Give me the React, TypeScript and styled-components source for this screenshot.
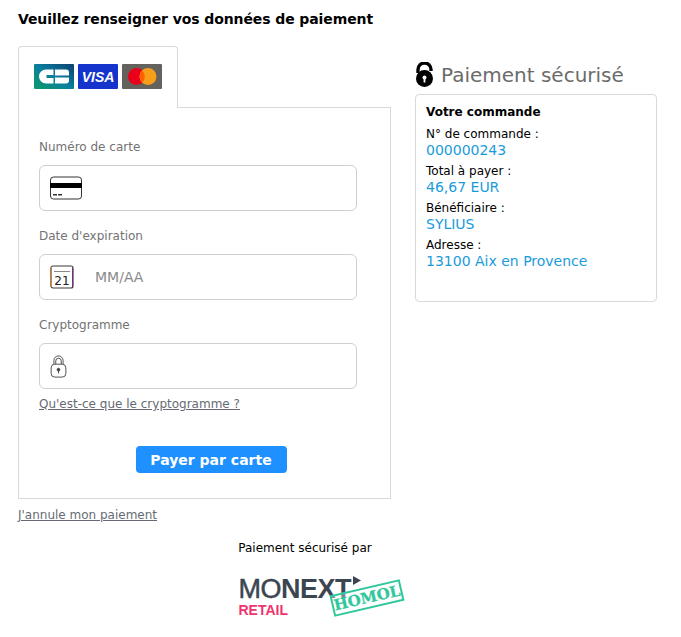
import React from 'react';
import styled, { createGlobalStyle } from 'styled-components';

const GlobalStyle = createGlobalStyle`
  html, body {
    margin: 0;
    padding: 0;
    background: #ffffff;
    font-family: "DejaVu Sans", Verdana, sans-serif;
  }
`;

const Page = styled.div`
  width: 681px;
  height: 637px;
  padding: 10px 24px 0 18px;
  box-sizing: border-box;
  overflow: hidden;
`;

const Title = styled.h1`
  margin: 0 0 18px;
  font-size: 14px;
  line-height: 18px;
  letter-spacing: -0.1px;
  font-weight: bold;
  color: #000;
`;

const Columns = styled.div`
  display: flex;
  align-items: flex-start;
  gap: 24px;
`;

const LeftColumn = styled.div`
  width: 373px;
  flex: none;
`;

const RightColumn = styled.div`
  width: 242px;
  flex: none;
  padding-top: 15px;
`;

const Tab = styled.div`
  width: 160px;
  height: 62px;
  box-sizing: border-box;
  border: 1px solid #d9d9d9;
  border-bottom: none;
  border-radius: 4px 4px 0 0;
  background: #fff;
  padding: 17px 0 0 15px;
  display: flex;
  gap: 4px;
  align-items: flex-start;
  position: relative;
  z-index: 1;
`;

const Brand = styled.div`
  width: 40px;
  height: 25px;
  border-radius: 1px;
  overflow: hidden;
  svg { display: block; }
`;

const Panel = styled.div`
  margin-top: -1px;
  height: 392px;
  box-sizing: border-box;
  border: 1px solid #d9d9d9;
  padding: 31px 33px 0 20px;
`;

const Field = styled.div`
  margin-bottom: 17px;
`;

const Label = styled.div`
  font-size: 12px;
  line-height: 16px;
  color: #737373;
  margin-bottom: 10px;
`;

const InputBox = styled.div`
  height: 46px;
  box-sizing: border-box;
  border: 1px solid #cfcfcf;
  border-radius: 6px;
  display: flex;
  align-items: center;
  padding-left: 10px;
`;

const Placeholder = styled.span`
  font-size: 14px;
  color: #8a8a8a;
  margin-left: 21px;
`;

const HelpLink = styled.a`
  display: block;
  margin-top: -10px;
  font-size: 12px;
  line-height: 16px;
  color: #666b73;
  text-decoration: underline;
`;

const PayRow = styled.div`
  display: flex;
  justify-content: center;
  margin-top: 34px;
  padding-left: 26px;
`;

const PayButton = styled.button`
  width: 151px;
  height: 27px;
  border: none;
  border-radius: 4px;
  background: #1e90ff;
  color: #fff;
  font-family: inherit;
  font-size: 14px;
  font-weight: bold;
  padding: 0;
`;

const CancelLink = styled.a`
  display: block;
  margin-top: 8px;
  font-size: 12px;
  line-height: 16px;
  color: #666b73;
  text-decoration: underline;
`;

const SecureHeader = styled.div`
  display: flex;
  align-items: center;
  gap: 7px;
  height: 28px;
  margin-bottom: 5px;
`;

const SecureTitle = styled.span`
  font-size: 20px;
  color: #6b6b6b;
`;

const OrderBox = styled.div`
  height: 208px;
  box-sizing: border-box;
  border: 1px solid #d9d9d9;
  border-radius: 4px;
  padding: 9px 10px;
`;

const OrderTitle = styled.div`
  font-size: 12px;
  line-height: 17px;
  font-weight: bold;
  color: #000;
  margin-bottom: 5px;
`;

const OrderLabel = styled.div`
  font-size: 12px;
  line-height: 16px;
  color: #000;
`;

const OrderValue = styled.div`
  font-size: 14px;
  line-height: 17px;
  color: #1a9bdc;
  margin-bottom: 4px;
`;

const Footer = styled.div`
  display: flex;
  flex-direction: column;
  align-items: center;
  width: 574px;
  margin-top: 17px;
`;

const FooterText = styled.div`
  font-size: 12px;
  line-height: 16px;
  color: #000;
  margin-bottom: 19px;
`;

const LogoWrap = styled.div`
  width: 166px;
  height: 46px;
  position: relative;
  margin-left: 33px;
`;

const MonextWord = styled.div`
  font-family: "Liberation Sans", Arial, sans-serif;
  font-size: 27px;
  line-height: 28px;
  letter-spacing: -0.5px;
  color: #3c4650;
`;

const MonextLight = styled.span`
  -webkit-text-stroke: 0.5px #3c4650;
`;

const MonextBold = styled.span`
  font-weight: bold;
`;

const Retail = styled.div`
  font-family: "Liberation Sans", Arial, sans-serif;
  font-size: 14px;
  line-height: 15px;
  font-weight: bold;
  color: #f0336f;
`;

const Arrow = styled.svg`
  position: absolute;
  left: 114px;
  top: 1px;
`;

const Stamp = styled.div`
  position: absolute;
  left: 92px;
  top: 12px;
  width: 72px;
  height: 22px;
  box-sizing: border-box;
  border: 2px solid #2fc79c;
  transform: rotate(-13deg);
  font-family: "DejaVu Serif", "Liberation Serif", serif;
  font-size: 15px;
  line-height: 18px;
  font-weight: bold;
  text-align: center;
  white-space: nowrap;
  color: #2fc79c;
  -webkit-text-stroke: 0.3px #2fc79c;
  background: rgba(255, 255, 255, 0.35);
`;

const CbLogo = () => (
  <svg width="40" height="25" viewBox="0 0 40 25">
    <defs>
      <linearGradient id="cbBg" x1="0" y1="1" x2="1" y2="0">
        <stop offset="0" stopColor="#0a9a6a" />
        <stop offset="0.5" stopColor="#0a7f9e" />
        <stop offset="1" stopColor="#0c3f72" />
      </linearGradient>
    </defs>
    <rect width="40" height="25" fill="url(#cbBg)" />
    <path d="M19.500 5.500h-7.500a7 7 0 0 0 0 14h7.500V14h-7v-3h7z" fill="#fff" />
    <path d="M21 5.500h11a3 3 0 0 1 3 3v3H21zM21 13.500h14v3a3 3 0 0 1-3 3H21z" fill="#fff" />
  </svg>
);

const VisaLogo = () => (
  <svg width="40" height="25" viewBox="0 0 40 25">
    <rect width="40" height="25" fill="#1434cb" />
    <text x="20" y="18" textAnchor="middle" fontFamily="Liberation Sans, sans-serif" fontSize="14" fontWeight="bold" fontStyle="italic" fill="#fff">VISA</text>
  </svg>
);

const MastercardLogo = () => (
  <svg width="40" height="25" viewBox="0 0 40 25">
    <rect width="40" height="25" fill="#63625d" />
    <circle cx="14.500" cy="12.500" r="8.500" fill="#eb001b" />
    <circle cx="26" cy="12.500" r="8.500" fill="#f79e1b" />
    <path d="M20.250 6.400a8.500 8.500 0 0 1 0 12.200a8.500 8.500 0 0 1 0-12.200z" fill="#ff5f00" />
  </svg>
);

const CardIcon = () => (
  <svg width="32" height="24" viewBox="0 0 32 24">
    <rect x="0.5" y="1" width="31" height="22" rx="3" fill="#fff" stroke="#333" />
    <rect x="0" y="7" width="32" height="5" fill="#000" />
    <rect x="3" y="18" width="4" height="1.500" fill="#333" />
    <rect x="8" y="18" width="4" height="1.500" fill="#333" />
  </svg>
);

const CalendarIcon = () => (
  <svg width="24" height="24" viewBox="0 0 24 24">
    <rect x="1" y="1" width="22" height="22" rx="2" fill="#fff" stroke="#3a3a3a" strokeWidth="1.200" />
    <path d="M1.500 2v20" stroke="#d9822b" strokeWidth="1" />
    <path d="M22.500 3v19" stroke="#7a2a8a" strokeWidth="1" />
    <rect x="4" y="6" width="16" height="1" fill="#888" />
    <text x="12" y="20" textAnchor="middle" fontFamily="DejaVu Sans, sans-serif" fontSize="12" fill="#222">21</text>
  </svg>
);

const PadlockIcon = () => (
  <svg width="17" height="23" viewBox="0 0 18 25" fill="none" stroke="#444" strokeWidth="1">
    <path d="M4 10V6a5 5 0 0 1 10 0v4" />
    <path d="M6 10V6.500a3 3 0 0 1 6 0V10" />
    <rect x="1" y="10" width="16" height="14" rx="4" fill="#fff" />
    <circle cx="9" cy="16" r="1.500" fill="#444" />
    <path d="M9 17v3" />
  </svg>
);

const OpenLockIcon = () => (
  <svg width="19" height="26" viewBox="0 0 19 26">
    <path d="M3 11V7.500a6.500 6.500 0 0 1 13 0V9" fill="none" stroke="#000" strokeWidth="3.400" />
    <circle cx="9.500" cy="16.500" r="8.500" fill="#000" />
    <circle cx="9.500" cy="15.500" r="2" fill="#fff" />
    <rect x="8.600" y="16" width="1.800" height="4.500" fill="#fff" />
  </svg>
);

const order = [
  { label: 'N° de commande :', value: '000000243' },
  { label: 'Total à payer :', value: '46,67 EUR' },
  { label: 'Bénéficiaire :', value: 'SYLIUS' },
  { label: 'Adresse :', value: '13100 Aix en Provence' },
];

const App: React.FC = () => (
  <Page>
    <GlobalStyle />
    <Title>Veuillez renseigner vos données de paiement</Title>
    <Columns>
      <LeftColumn>
        <Tab>
          <Brand><CbLogo /></Brand>
          <Brand><VisaLogo /></Brand>
          <Brand><MastercardLogo /></Brand>
        </Tab>
        <Panel>
          <Field>
            <Label>Numéro de carte</Label>
            <InputBox><CardIcon /></InputBox>
          </Field>
          <Field>
            <Label>Date d'expiration</Label>
            <InputBox>
              <CalendarIcon />
              <Placeholder>MM/AA</Placeholder>
            </InputBox>
          </Field>
          <Field>
            <Label>Cryptogramme</Label>
            <InputBox><PadlockIcon /></InputBox>
          </Field>
          <HelpLink>Qu'est-ce que le cryptogramme ?</HelpLink>
          <PayRow>
            <PayButton>Payer par carte</PayButton>
          </PayRow>
        </Panel>
        <CancelLink>J'annule mon paiement</CancelLink>
      </LeftColumn>
      <RightColumn>
        <SecureHeader>
          <OpenLockIcon />
          <SecureTitle>Paiement sécurisé</SecureTitle>
        </SecureHeader>
        <OrderBox>
          <OrderTitle>Votre commande</OrderTitle>
          {order.map(item => (
            <div key={item.label}>
              <OrderLabel>{item.label}</OrderLabel>
              <OrderValue>{item.value}</OrderValue>
            </div>
          ))}
        </OrderBox>
      </RightColumn>
    </Columns>
    <Footer>
      <FooterText>Paiement sécurisé par</FooterText>
      <LogoWrap>
        <MonextWord><MonextLight>MO</MonextLight><MonextBold>NEXT</MonextBold></MonextWord>
        <Arrow width="8" height="9" viewBox="0 0 8 9">
          <path d="M0 0l8 4.500-8 4.500z" fill="#3c4650" />
        </Arrow>
        <Retail>RETAIL</Retail>
        <Stamp>HOMOL</Stamp>
      </LogoWrap>
    </Footer>
  </Page>
);

export default App;
